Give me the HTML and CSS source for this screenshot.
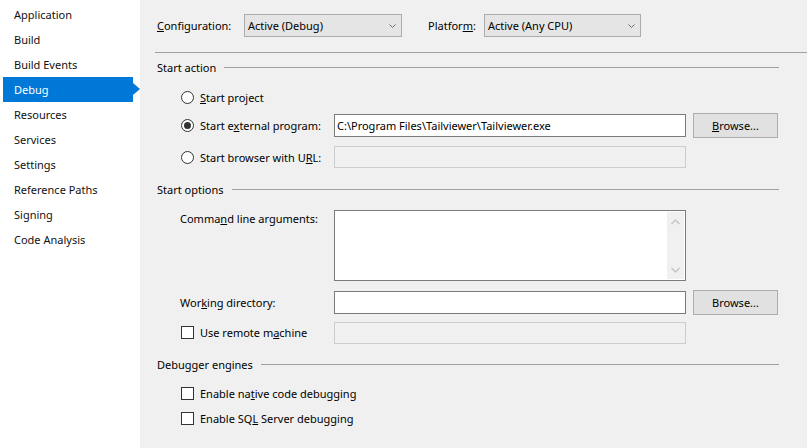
FILE: index.html
```html
<!DOCTYPE html>
<html>
<head>
<meta charset="utf-8">
<link rel="stylesheet" href="styles.css">
</head>
<body>
<div class="app">
  <nav class="sidebar">
    <div class="nav-item">Application</div>
    <div class="nav-item">Build</div>
    <div class="nav-item">Build Events</div>
    <div class="nav-item selected">Debug</div>
    <div class="nav-item">Resources</div>
    <div class="nav-item">Services</div>
    <div class="nav-item">Settings</div>
    <div class="nav-item">Reference Paths</div>
    <div class="nav-item">Signing</div>
    <div class="nav-item">Code Analysis</div>
  </nav>
  <main class="main">
    <div class="top-row">
      <span class="top-label cfg-label"><u>C</u>onfiguration:</span>
      <div class="combo cfg-combo"><span>Active (Debug)</span><svg class="chev" width="7" height="4" viewBox="0 0 7 4"><polyline points="0.5,0.5 3.5,3.5 6.5,0.5" fill="none" stroke="#6d6d6d" stroke-width="1"/></svg></div>
      <span class="top-label plat-label">Platfor<u>m</u>:</span>
      <div class="combo plat-combo"><span>Active (Any CPU)</span><svg class="chev" width="7" height="4" viewBox="0 0 7 4"><polyline points="0.5,0.5 3.5,3.5 6.5,0.5" fill="none" stroke="#6d6d6d" stroke-width="1"/></svg></div>
    </div>
    <div class="top-sep"></div>

    <div class="section-header sh-action">Start action</div>

    <div class="form-row r-project">
      <label class="opt"><span class="radio"></span><span><u>S</u>tart project</span></label>
    </div>
    <div class="form-row r-external">
      <label class="opt"><span class="radio checked"></span><span>Start e<u>x</u>ternal program:</span></label>
      <div class="textbox">C:\Program Files\Tailviewer\Tailviewer.exe</div>
      <button class="btn"><u>B</u>rowse...</button>
    </div>
    <div class="form-row r-url">
      <label class="opt"><span class="radio"></span><span>Start browser with U<u>R</u>L:</span></label>
      <div class="textbox disabled"></div>
    </div>

    <div class="section-header sh-options">Start options</div>

    <div class="form-row r-cmd">
      <span class="field-label top">Comma<u>n</u>d line arguments:</span>
      <div class="textarea">
        <div class="scrollbar">
          <svg width="9" height="6" viewBox="0 0 9 6"><polyline points="0.5,5 4.5,1 8.5,5" fill="none" stroke="#c4c4c4" stroke-width="1.4"/></svg>
          <svg width="9" height="6" viewBox="0 0 9 6"><polyline points="0.5,1 4.5,5 8.5,1" fill="none" stroke="#c4c4c4" stroke-width="1.4"/></svg>
        </div>
      </div>
    </div>
    <div class="form-row r-work">
      <span class="field-label">Wor<u>k</u>ing directory:</span>
      <div class="textbox"></div>
      <button class="btn">Browse...</button>
    </div>
    <div class="form-row r-remote">
      <label class="opt"><span class="checkbox"></span><span>Use remote m<u>a</u>chine</span></label>
      <div class="textbox disabled"></div>
    </div>

    <div class="section-header sh-engines">Debugger engines</div>

    <div class="check-row r-native">
      <label class="opt"><span class="checkbox"></span><span>Enable na<u>t</u>ive code debugging</span></label>
    </div>
    <div class="check-row r-sql">
      <label class="opt"><span class="checkbox"></span><span>Enable SQ<u>L</u> Server debugging</span></label>
    </div>
  </main>
</div>
</body>
</html>
```

FILE: styles.css
```css
* { box-sizing: border-box; }
html, body {
  margin: 0;
  padding: 0;
  height: 100%;
}
body {
  font-family: "Noto Sans", "Liberation Sans", sans-serif;
  font-size: 11px;
  color: #000;
  background: #f0f0f0;
}
u { text-decoration: underline; text-underline-offset: 1px; }

.app {
  display: flex;
  height: 448px;
  overflow: hidden;
}

/* Sidebar */
.sidebar {
  width: 140px;
  flex: none;
  background: #ffffff;
  padding-top: 2px;
}
.nav-item {
  position: relative;
  height: 25px;
  line-height: 25px;
  margin-left: 3px;
  width: 130px;
  padding-left: 11px;
  color: #111111;
}
.nav-item.selected {
  background: #0078d7;
  color: #ffffff;
}
.nav-item.selected::after {
  content: "";
  position: absolute;
  right: -7px;
  top: 6px;
  border-top: 6.5px solid transparent;
  border-bottom: 6.5px solid transparent;
  border-left: 7px solid #0078d7;
}

/* Main */
.main {
  flex: 1;
  min-width: 0;
  padding: 14px 28px 0 15px;
  display: flex;
  flex-direction: column;
}

.top-row {
  display: flex;
  align-items: center;
  height: 23px;
}
.top-label { padding-left: 2px; }
.cfg-label { width: 89px; }
.plat-label { width: 58px; margin-left: 24px; }
.combo {
  height: 23px;
  background: #e5e5e5;
  border: 1px solid #acacac;
  display: flex;
  align-items: center;
  justify-content: space-between;
  padding: 0 5px 0 3px;
}
.cfg-combo { width: 158px; }
.plat-combo { width: 157px; }
.chev { flex: none; }

.top-sep {
  margin: 15px -28px 0 0;
  border-top: 1px solid #a0a0a0;
}

.section-header {
  display: flex;
  align-items: center;
  height: 16px;
  padding-left: 2px;
  gap: 8px;
  margin-top: 12px;
}
.section-header::after {
  content: "";
  flex: 1;
  height: 1px;
  background: #a0a0a0;
}
.sh-action { margin-top: 6px; }

.form-row {
  display: grid;
  grid-template-columns: 172px 352px 85px;
  column-gap: 7px;
  align-items: center;
  height: 23px;
}
.check-row {
  display: flex;
  align-items: center;
  height: 16px;
}

.opt {
  display: flex;
  align-items: center;
  gap: 6px;
  padding-left: 26px;
  white-space: nowrap;
}
.field-label { padding-left: 25px; white-space: nowrap; }
.field-label.top { align-self: start; padding-top: 1px; }

.radio {
  width: 13px;
  height: 13px;
  border-radius: 50%;
  border: 1px solid #333333;
  background: #ffffff;
  flex: none;
  display: flex;
  align-items: center;
  justify-content: center;
}
.radio.checked::after {
  content: "";
  width: 7px;
  height: 7px;
  border-radius: 50%;
  background: #333333;
}
.checkbox {
  width: 13px;
  height: 13px;
  border: 1px solid #333333;
  background: #ffffff;
  flex: none;
}

.textbox {
  height: 23px;
  border: 1px solid #7a7a7a;
  background: #ffffff;
  padding-left: 2px;
  line-height: 21px;
  white-space: nowrap;
  overflow: hidden;
}
.textbox.disabled {
  border-color: #cccccc;
  background: #f0f0f0;
  height: 22px;
}

.btn {
  height: 25px;
  margin: -1px 0;
  background: #e1e1e1;
  border: 1px solid #adadad;
  font: inherit;
  color: #000;
  padding: 0;
}

.textarea {
  height: 71px;
  border: 1px solid #7a7a7a;
  background: #ffffff;
  display: flex;
  justify-content: flex-end;
  align-self: start;
  padding: 1px;
}
.scrollbar {
  width: 17px;
  background: #f0f0f0;
  display: flex;
  flex-direction: column;
  align-items: center;
  justify-content: space-between;
  padding: 7px 0 6px;
}

/* vertical rhythm */
.r-project { margin-top: 11px; }
.r-external { margin-top: 5px; }
.r-url { margin-top: 9px; }
.r-url .textbox { align-self: start; }
.r-cmd { margin-top: 13px; height: 71px; align-items: start; }
.r-work { margin-top: 10px; }
.r-remote { margin-top: 7px; }
.r-native { margin-top: 13px; }
.r-sql { margin-top: 9px; }
```
